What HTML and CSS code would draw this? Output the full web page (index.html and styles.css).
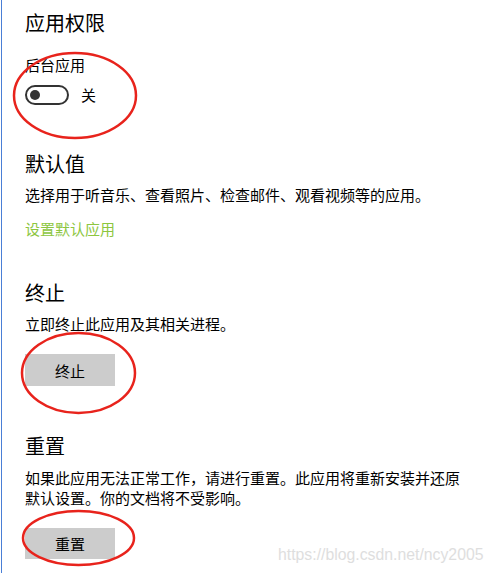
FILE: index.html
```html
<!DOCTYPE html>
<html lang="zh-CN">
<head>
<meta charset="utf-8">
<link rel="stylesheet" href="styles.css">
</head>
<body>
<div class="page">
  <section class="sec">
    <h1 class="title first">应用权限</h1>
    <div class="label">后台应用</div>
    <div class="toggle-row">
      <span class="toggle"><span class="knob"></span></span>
      <span class="state">关</span>
    </div>
  </section>

  <section class="sec">
    <h2 class="title t-default">默认值</h2>
    <p class="desc">选择用于听音乐、查看照片、检查邮件、观看视频等的应用。</p>
    <a class="link">设置默认应用</a>
  </section>

  <section class="sec">
    <h2 class="title t-end">终止</h2>
    <p class="desc">立即终止此应用及其相关进程。</p>
    <button class="btn">终止</button>
  </section>

  <section class="sec">
    <h2 class="title t-reset">重置</h2>
    <p class="desc wrap">如果此应用无法正常工作，请进行重置。此应用将重新安装并还原默认设置。你的文档将不受影响。</p>
    <button class="btn btn-reset">重置</button>
  </section>
</div>

<svg class="marks" width="494" height="573" viewBox="0 0 494 573">
  <ellipse cx="75" cy="95.5" rx="61" ry="42.5"/>
  <ellipse cx="78.5" cy="373" rx="56.5" ry="40"/>
  <ellipse cx="78.5" cy="538" rx="55.5" ry="27"/>
</svg>
<div class="watermark">https://blog.csdn.net/ncy2005</div>
</body>
</html>
```
FILE: styles.css
```css
html, body {
  margin: 0;
  padding: 0;
  background: #fff;
}
body {
  width: 494px;
  height: 573px;
  overflow: hidden;
  position: relative;
  font-family: "Noto Sans CJK SC", "Noto Sans", sans-serif;
  color: #000;
}
.page {
  margin-left: 1px;
  border-left: 1px solid #4a7fd6;
  padding-left: 23px;
  min-height: 573px;
  box-sizing: border-box;
  display: flex;
  flex-direction: column;
}
.sec {
  display: flex;
  flex-direction: column;
  align-items: flex-start;
}
.title {
  margin: 0;
  font-size: 20px;
  font-weight: 400;
  line-height: 30px;
}
.first { margin-top: 8px; }
.t-default { margin-top: 44px; }
.t-end { margin-top: 39px; }
.t-reset { margin-top: 45px; }
.label {
  margin-top: 17px;
  font-size: 15px;
  line-height: 20px;
}
.toggle-row {
  margin-top: 10px;
  display: flex;
  align-items: center;
  gap: 12px;
}
.toggle {
  width: 44px;
  height: 20px;
  box-sizing: border-box;
  border: 2px solid #333;
  border-radius: 10px;
  display: flex;
  align-items: center;
  padding-left: 2.5px;
}
.knob {
  width: 10px;
  height: 10px;
  border-radius: 50%;
  background: #333;
}
.state {
  font-size: 15px;
  line-height: 20px;
}
.desc {
  margin: 6px 0 0;
  font-size: 15px;
  line-height: 20px;
}
.wrap {
  max-width: 440px;
  margin-top: 7px;
}
.link {
  margin-top: 14px;
  font-size: 15px;
  line-height: 20px;
  color: #8dc63f;
}
.btn {
  margin-top: 20px;
  width: 90px;
  height: 32px;
  border: 0;
  padding: 0;
  background: #cccccc;
  font-family: "Noto Sans CJK SC", sans-serif;
  font-size: 15px;
  color: #000;
}
.btn-reset {
  height: 31px;
}
.marks {
  position: absolute;
  left: 0;
  top: 0;
  pointer-events: none;
}
.marks ellipse {
  fill: none;
  stroke: #e8231c;
  stroke-width: 2.5;
}
.watermark {
  position: absolute;
  left: 278px;
  top: 546px;
  font-family: "Liberation Sans", Arial, sans-serif;
  font-size: 15.8px;
  line-height: 18px;
  color: #dedede;
}
```
